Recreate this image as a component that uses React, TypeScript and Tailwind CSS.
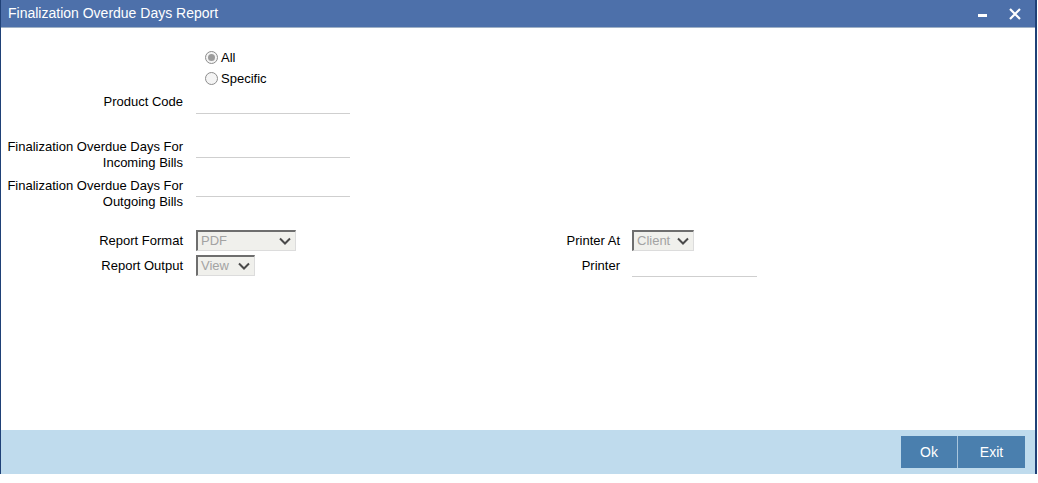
import React from "react";

const font = { fontFamily: '"Liberation Sans", Arial, sans-serif' };

const Chevron = () => (
  <svg width="12" height="8" viewBox="0 0 12 8" className="shrink-0">
    <path d="M1 1.5 L6 6.5 L11 1.5" fill="none" stroke="#4a4a4a" strokeWidth="2" />
  </svg>
);

const FakeSelect: React.FC<{ value: string; width: string }> = ({ value, width }) => (
  <div
    className={`${width} h-[21px] flex items-center justify-between pl-[3px] pr-[4px] bg-[#f0f0ec] border-t-2 border-l-2 border-t-[#6e6e6e] border-l-[#6e6e6e] border-r border-b border-r-[#dcdcdc] border-b-[#dcdcdc] text-[13px] text-[#a3a3a3]`}
  >
    <span>{value}</span>
    <Chevron />
  </div>
);

const Radio: React.FC<{ checked?: boolean; label: string }> = ({ checked, label }) => (
  <div className="flex items-center h-[21px] gap-[3px]">
    <span className="w-[13px] h-[13px] rounded-full border border-[#8d8d8d] bg-[#f4f4f4] flex items-center justify-center">
      {checked && <span className="w-[7px] h-[7px] rounded-full bg-[#9c9c9c]" />}
    </span>
    <span className="text-[13px] text-black">{label}</span>
  </div>
);

export default function App() {
  return (
    <div className="w-[1038px] h-[483px] bg-white" style={font}>
      <div className="w-[1037px] h-[474px] flex flex-col border-l border-r-2 border-[#1f4177]">
        {/* 标题栏 */}
        <div className="h-[28px] shrink-0 flex items-center justify-between bg-[#4d70aa] border-b border-b-[#9fb1c6] pl-[7px] pr-[14px]">
          <span className="text-white text-[14px]">Finalization Overdue Days Report</span>
          <div className="flex items-center gap-[22px]">
            <span className="w-[9px] h-[3px] bg-white mt-[4px]" />
            <svg width="12" height="12" viewBox="0 0 12 12">
              <path d="M1 1 L11 11 M11 1 L1 11" stroke="white" strokeWidth="2.2" />
            </svg>
          </div>
        </div>

        {/* 表单内容 */}
        <div className="flex-1 flex flex-col pt-[19px] text-[13px] text-black">
          <div className="pl-[204px]">
            <Radio checked label="All" />
            <Radio label="Specific" />
          </div>

          <div className="flex h-[25px] mt-[1px]">
            <div className="w-[182px] text-right leading-[24px]">Product Code</div>
            <div className="ml-[13px] w-[154px] h-[24px] border-b border-[#cfcfcf]" />
          </div>

          <div className="flex mt-[24px]">
            <div className="w-[182px] text-right leading-[16px]">
              Finalization Overdue Days For
              <br />
              Incoming Bills
            </div>
            <div className="ml-[13px] w-[154px] h-[19px] border-b border-[#cfcfcf]" />
          </div>

          <div className="flex mt-[7px]">
            <div className="w-[182px] text-right leading-[16px]">
              Finalization Overdue Days For
              <br />
              Outgoing Bills
            </div>
            <div className="ml-[13px] w-[154px] h-[19px] border-b border-[#cfcfcf]" />
          </div>

          <div className="flex mt-[20px]">
            <div className="w-[449px] flex flex-col gap-[4px]">
              <div className="flex items-center">
                <div className="w-[182px] text-right">Report Format</div>
                <div className="ml-[13px]">
                  <FakeSelect value="PDF" width="w-[100px]" />
                </div>
              </div>
              <div className="flex items-center">
                <div className="w-[182px] text-right">Report Output</div>
                <div className="ml-[13px]">
                  <FakeSelect value="View" width="w-[59px]" />
                </div>
              </div>
            </div>
            <div className="flex flex-col gap-[4px]">
              <div className="flex items-center">
                <div className="w-[170px] text-right">Printer At</div>
                <div className="ml-[12px]">
                  <FakeSelect value="Client" width="w-[62px]" />
                </div>
              </div>
              <div className="flex items-center h-[21px]">
                <div className="w-[170px] text-right">Printer</div>
                <div className="ml-[12px] w-[125px] h-[22px] border-b border-[#cfcfcf] self-start" />
              </div>
            </div>
          </div>
        </div>

        {/* 底部按钮栏 */}
        <div className="h-[44px] shrink-0 bg-[#bfdbed] flex items-center justify-end pr-[10px]">
          <div className="flex h-[32px]">
            <button className="w-[57px] h-full bg-[#4a7fae] text-white text-[14px] border-r border-[#a9c6dd]">
              Ok
            </button>
            <button className="w-[67px] h-full bg-[#4a7fae] text-white text-[14px]">Exit</button>
          </div>
        </div>
      </div>
    </div>
  );
}
